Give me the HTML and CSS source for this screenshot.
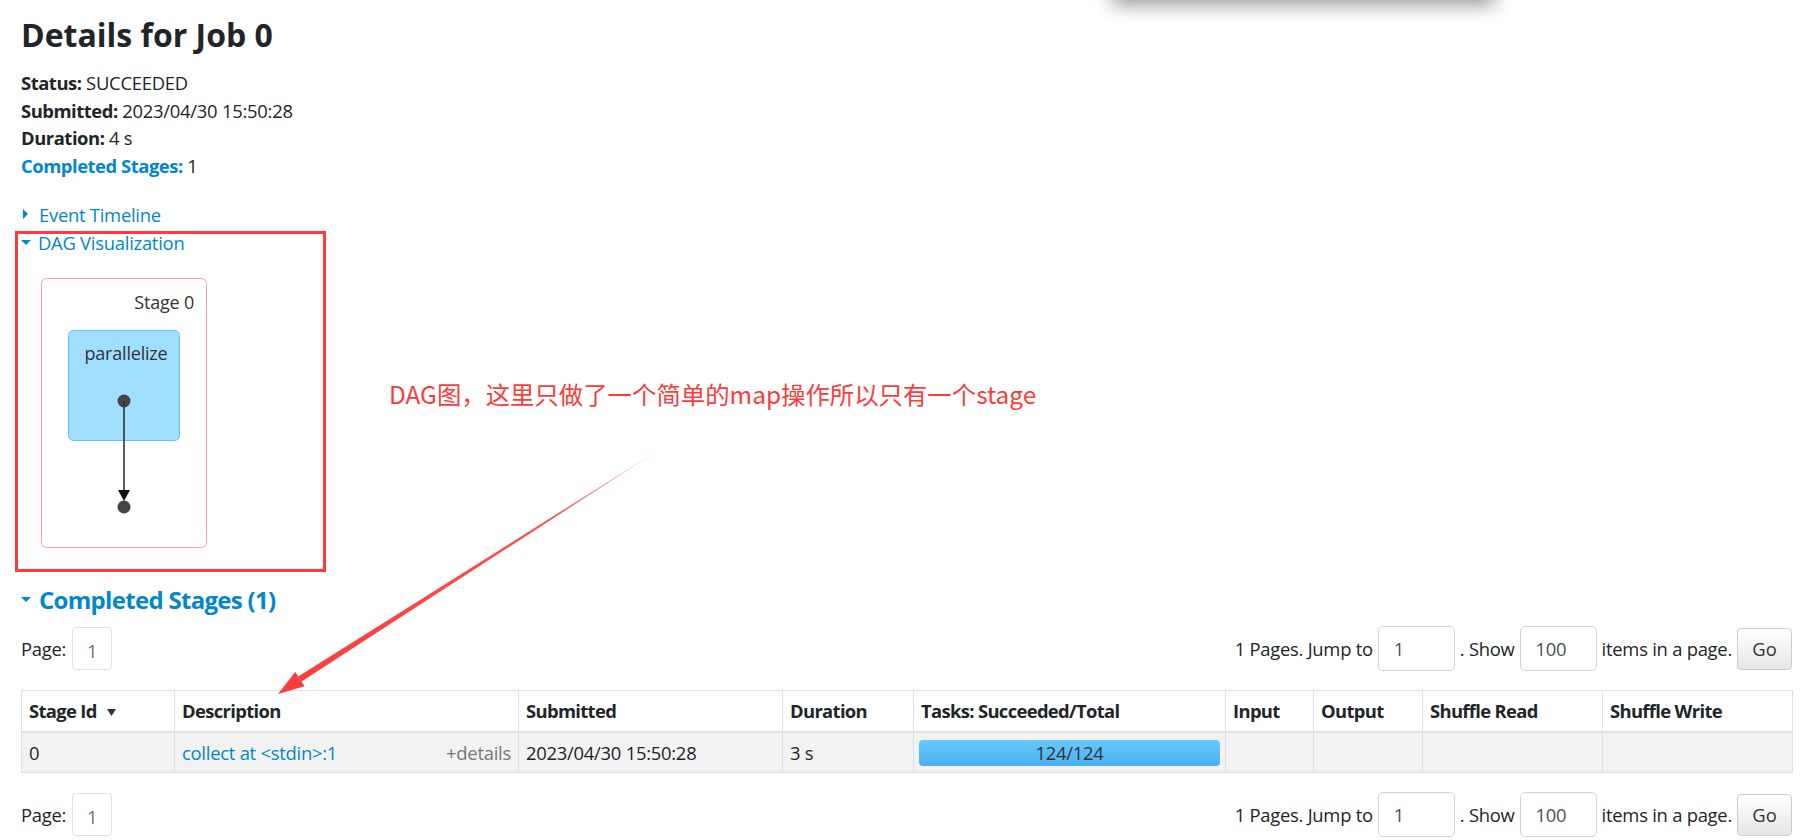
FILE: index.html
```html
<!DOCTYPE html>
<html lang="en">
<head>
<meta charset="utf-8">
<title>Details for Job 0</title>
<link rel="stylesheet" href="styles.css">
</head>
<body>
<div class="popup-shadow"></div>
<div class="container">
  <h3 class="title">Details for Job 0</h3>
  <ul class="summary">
    <li><strong>Status:</strong> SUCCEEDED</li>
    <li><strong>Submitted:</strong> 2023/04/30 15:50:28</li>
    <li><strong>Duration:</strong> 4 s</li>
    <li><a class="blue-label"><strong>Completed Stages:</strong></a> 1</li>
  </ul>
  <div class="toggle"><span class="caret-right"></span><a class="toggle-link">Event Timeline</a></div>
  <div class="toggle"><span class="caret-down"></span><a class="toggle-link">DAG Visualization</a></div>
  <div class="dag">
    <svg class="dag-svg" width="200" height="300" viewBox="0 0 200 300">
      <rect x="20.5" y="22.5" width="165" height="269" rx="5" fill="#ffffff" stroke="#ff99ac" stroke-width="1"/>
      <text x="173" y="53" text-anchor="end" class="dag-label">Stage 0</text>
      <rect x="47.5" y="74.5" width="111" height="110" rx="5" fill="#a0dfff" stroke="#5cc5fa" stroke-width="1"/>
      <text x="105" y="104" text-anchor="middle" class="dag-label">parallelize</text>
      <circle cx="103" cy="145" r="6.5" fill="#444"/>
      <line x1="103" y1="145" x2="103" y2="236" stroke="#333" stroke-width="1.6"/>
      <path d="M97 234 L109 234 L103 245 Z" fill="#111"/>
      <circle cx="103" cy="251" r="6.5" fill="#444"/>
    </svg>
  </div>
  <h4 class="section-title"><span class="caret-down"></span>Completed Stages (1)</h4>
  <div class="pager">
    <div class="pager-left"><span>Page:</span><span class="page-box">1</span></div>
    <div class="pager-right">
      <span>1 Pages. Jump to</span>
      <input class="pager-input" type="text" value="1">
      <span>. Show</span>
      <input class="pager-input" type="text" value="100">
      <span>items in a page.</span>
      <button class="go-btn">Go</button>
    </div>
  </div>
  <table class="stages">
    <colgroup>
      <col class="c1"><col class="c2"><col class="c3"><col class="c4"><col class="c5"><col class="c6"><col class="c7"><col class="c8"><col class="c9">
    </colgroup>
    <thead>
      <tr>
        <th>Stage Id <svg class="sort" width="9" height="7" viewBox="0 0 9 7"><path d="M0 0 L9 0 L4.5 7 Z" fill="#333"/></svg></th>
        <th>Description</th>
        <th>Submitted</th>
        <th>Duration</th>
        <th>Tasks: Succeeded/Total</th>
        <th>Input</th>
        <th>Output</th>
        <th>Shuffle Read</th>
        <th>Shuffle Write</th>
      </tr>
    </thead>
    <tbody>
      <tr>
        <td>0</td>
        <td><div class="desc"><a class="desc-link">collect at &lt;stdin&gt;:1</a><span class="details">+details</span></div></td>
        <td>2023/04/30 15:50:28</td>
        <td>3 s</td>
        <td class="task-cell"><div class="progress">124/124</div></td>
        <td></td>
        <td></td>
        <td></td>
        <td></td>
      </tr>
    </tbody>
  </table>
  <div class="pager pager-bottom">
    <div class="pager-left"><span>Page:</span><span class="page-box">1</span></div>
    <div class="pager-right">
      <span>1 Pages. Jump to</span>
      <input class="pager-input" type="text" value="1">
      <span>. Show</span>
      <input class="pager-input" type="text" value="100">
      <span>items in a page.</span>
      <button class="go-btn">Go</button>
    </div>
  </div>
</div>

<div class="annot-box"></div>
<div class="annot-text">DAG图，这里只做了一个简单的map操作所以只有一个stage</div>
<svg class="annot-arrow" width="1804" height="840" viewBox="0 0 1804 840">
  <defs>
    <linearGradient id="shaft" gradientUnits="userSpaceOnUse" x1="668" y1="444" x2="278" y2="693">
      <stop offset="0" stop-color="#fa3c3c" stop-opacity="0.08"/>
      <stop offset="0.3" stop-color="#fa3c3c" stop-opacity="0.9"/>
      <stop offset="1" stop-color="#fa3c3c" stop-opacity="1"/>
    </linearGradient>
  </defs>
  <polygon points="668,444 301.6,681.4 298.2,676.6" fill="url(#shaft)"/>
  <polygon points="278,694 295.2,672 299.9,679 304.6,686.2" fill="#fa3c3c"/>
</svg>
</body>
</html>
```

FILE: styles.css
```css
html, body {
  margin: 0;
  padding: 0;
  background: #ffffff;
}

body {
  font-family: "Open Sans", "Noto Sans CJK SC", sans-serif;
  font-size: 18.4px;
  line-height: 27.6px;
  letter-spacing: -0.25px;
  color: #212529;
  position: relative;
  width: 1804px;
  height: 840px;
  overflow: hidden;
}

.container {
  padding: 0 12px 0 21px;
}

.title {
  margin: 16px 0 15px;
  font-size: 32px;
  line-height: 38px;
  font-weight: 700;
  letter-spacing: 0;
  color: #212529;
}

.summary {
  list-style: none;
  margin: 0 0 21px;
  padding: 0;
}

.summary strong {
  font-weight: 700;
  letter-spacing: -0.45px;
}

.blue-label {
  color: #0088cc;
}

.toggle {
  display: flex;
  align-items: center;
  height: 28px;
}

.toggle-link {
  color: #0088cc;
}

.caret-right {
  width: 0;
  height: 0;
  border-left: 5px solid #0088cc;
  border-top: 5px solid transparent;
  border-bottom: 5px solid transparent;
  margin: 0 11px 0 2px;
}

.caret-down {
  width: 0;
  height: 0;
  border-top: 5px solid #0088cc;
  border-left: 5px solid transparent;
  border-right: 5px solid transparent;
  margin-right: 7px;
}

.dag {
  height: 300px;
}

.dag-svg {
  display: block;
}

.dag-label {
  font-family: "Open Sans", sans-serif;
  font-size: 18px;
  letter-spacing: -0.2px;
  fill: #333333;
}

.section-title {
  margin: 29px 0 0;
  font-size: 24px;
  line-height: 29px;
  font-weight: 700;
  letter-spacing: -0.7px;
  color: #0088cc;
  display: flex;
  align-items: center;
}

.section-title .caret-down {
  margin-right: 8px;
}

.pager {
  margin-top: 12px;
  height: 45px;
  display: flex;
  justify-content: space-between;
  align-items: center;
}

.pager-bottom {
  margin-top: 19px;
}

.pager-left {
  display: flex;
  align-items: center;
  gap: 6px;
}

.page-box {
  width: 38px;
  height: 38px;
  padding-top: 3px;
  border: 1px solid #dee2e6;
  border-radius: 4px;
  display: flex;
  align-items: center;
  justify-content: center;
  color: #6c757d;
}

.pager-right {
  display: flex;
  align-items: center;
  gap: 5px;
}

.pager-input {
  width: 77px;
  height: 45px;
  box-sizing: border-box;
  border: 1px solid #ced4da;
  border-radius: 5px;
  padding: 0 0 0 15px;
  font-family: inherit;
  font-size: 18.4px;
  letter-spacing: -0.25px;
  color: #495057;
  background: #ffffff;
  margin: 0;
}

.go-btn {
  width: 55px;
  height: 42px;
  box-sizing: border-box;
  border: 1px solid #cccccc;
  border-radius: 4px;
  background: linear-gradient(#ffffff, #e6e6e6);
  font-family: inherit;
  font-size: 18.4px;
  color: #333333;
  padding: 0;
  margin: 0;
}

.stages {
  margin-top: 19px;
  width: 1771px;
  border-collapse: collapse;
  table-layout: fixed;
}

.c1 { width: 153px; }
.c2 { width: 344px; }
.c3 { width: 264px; }
.c4 { width: 131px; }
.c5 { width: 312px; }
.c6 { width: 88px; }
.c7 { width: 109px; }
.c8 { width: 180px; }
.c9 { width: 190px; }

.stages th,
.stages td {
  border: 1px solid #dee2e6;
  padding: 0 7px;
  text-align: left;
  vertical-align: middle;
  white-space: nowrap;
  overflow: hidden;
}

.stages th {
  height: 38px;
  padding-bottom: 2px;
  border-bottom: 2px solid #dee2e6;
  font-weight: 700;
  letter-spacing: -0.65px;
  color: #212529;
}

.stages td {
  height: 39px;
}

.stages tbody tr {
  background: #f2f2f2;
}

.sort {
  margin-left: 6px;
  vertical-align: 2px;
}

.desc {
  display: flex;
  justify-content: space-between;
  align-items: center;
}

.desc-link {
  color: #0088cc;
}

.details {
  color: #777777;
}

.stages td.task-cell {
  padding: 0 5px;
}

.progress {
  height: 26px;
  border-radius: 4px;
  background: linear-gradient(#66c9fd, #4daff0);
  display: flex;
  align-items: center;
  justify-content: center;
  color: #333333;
}

.popup-shadow {
  position: absolute;
  left: 1112px;
  top: -60px;
  width: 383px;
  height: 60px;
  background: #ffffff;
  box-shadow: 0 5px 18px rgba(0, 0, 0, 0.4);
}

.annot-box {
  position: absolute;
  left: 15px;
  top: 231px;
  width: 311px;
  height: 341px;
  box-sizing: border-box;
  border: 3px solid #fa3c3c;
}

.annot-text {
  position: absolute;
  left: 389px;
  top: 379px;
  font-family: "Noto Sans CJK SC", sans-serif;
  font-size: 24.4px;
  line-height: 30px;
  letter-spacing: 0;
  color: #fa3c3c;
  white-space: nowrap;
}

.annot-arrow {
  position: absolute;
  left: 0;
  top: 0;
  pointer-events: none;
}
```
